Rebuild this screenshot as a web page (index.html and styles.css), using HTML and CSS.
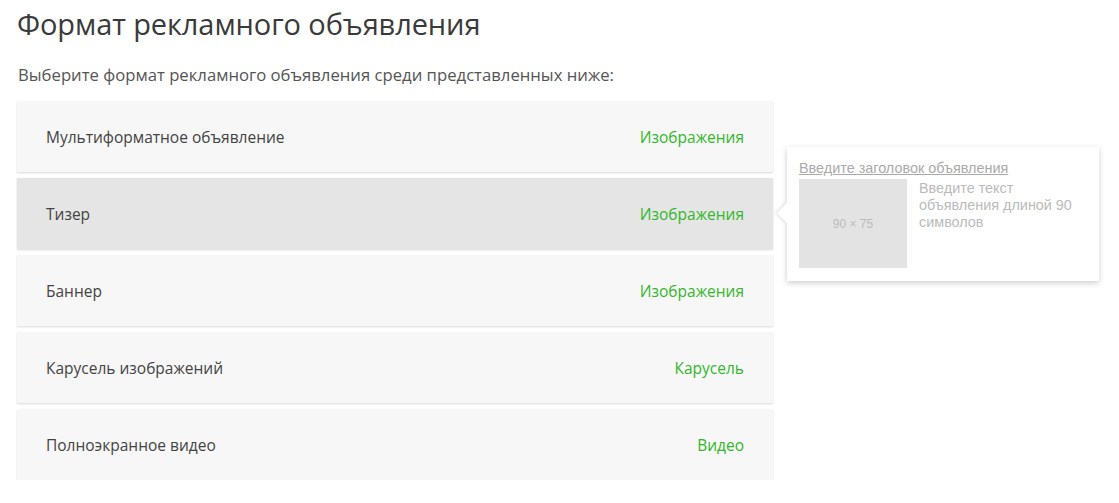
FILE: index.html
```html
<!DOCTYPE html>
<html lang="ru">
<head>
<meta charset="UTF-8">
<title>Формат рекламного объявления</title>
<link rel="stylesheet" href="styles.css">
</head>
<body>
<div class="page">
  <h1 class="title">Формат рекламного объявления</h1>
  <p class="lead">Выберите формат рекламного объявления среди представленных ниже:</p>
  <div class="layout">
    <ul class="formats">
      <li class="format"><span class="format-name">Мультиформатное объявление</span><span class="format-type">Изображения</span></li>
      <li class="format active"><span class="format-name">Тизер</span><span class="format-type">Изображения</span></li>
      <li class="format"><span class="format-name">Баннер</span><span class="format-type">Изображения</span></li>
      <li class="format"><span class="format-name">Карусель изображений</span><span class="format-type">Карусель</span></li>
      <li class="format"><span class="format-name">Полноэкранное видео</span><span class="format-type">Видео</span></li>
    </ul>
    <div class="preview">
      <a class="preview-title" href="#">Введите заголовок объявления</a>
      <div class="preview-body">
        <div class="preview-image">90 × 75</div>
        <div class="preview-text">Введите текст объявления длиной 90 символов</div>
      </div>
    </div>
  </div>
</div>
</body>
</html>
```

FILE: styles.css
```css
body {
  margin: 0;
  background-color: #fff;
  font-family: "Open Sans", sans-serif;
  color: #333;
}

.page {
  padding: 0 17px;
}

.title {
  margin: 0;
  padding-top: 5px;
  font-size: 29px;
  font-weight: 400;
  line-height: 38px;
  color: #3a3a3a;
  letter-spacing: -0.1px;
}

.lead {
  margin: 21px 0 0 1px;
  font-size: 16.7px;
  line-height: 22px;
  color: #555;
}

.layout {
  display: flex;
  align-items: flex-start;
  margin-top: 15px;
}

.formats {
  list-style: none;
  margin: 0;
  padding: 0;
  width: 756px;
  display: flex;
  flex-direction: column;
  gap: 6px;
}

.format {
  display: flex;
  justify-content: space-between;
  align-items: center;
  height: 71px;
  padding: 0 29px;
  background-color: #f7f7f7;
  box-shadow: 0 1px 2px rgba(0, 0, 0, 0.15);
  font-size: 15.5px;
  color: #444;
  box-sizing: border-box;
}

.format.active {
  background-color: #e5e5e5;
}

.format-type {
  color: #33b72b;
}

.preview {
  position: relative;
  margin: 46px 0 0 14px;
  width: 312px;
  height: 134px;
  padding: 13px 12px 0;
  box-sizing: border-box;
  background-color: #fff;
  box-shadow: 0 2px 6px rgba(0, 0, 0, 0.2);
  font-family: "Liberation Sans", Arial, sans-serif;
}

.preview::before {
  content: "";
  position: absolute;
  left: -7px;
  top: 59px;
  width: 14px;
  height: 14px;
  background-color: #fff;
  transform: rotate(45deg);
  box-shadow: -2px 2px 3px rgba(0, 0, 0, 0.08);
}

.preview-title {
  position: relative;
  display: block;
  font-size: 14.4px;
  line-height: 17px;
  color: #aaa;
  text-decoration: underline;
}

.preview-body {
  position: relative;
  display: flex;
  gap: 12px;
  margin-top: 2px;
}

.preview-image {
  flex: none;
  width: 108px;
  height: 89px;
  background-color: #e3e3e3;
  color: #bbb;
  font-size: 12px;
  display: flex;
  align-items: center;
  justify-content: center;
}

.preview-text {
  margin-top: 1px;
  font-size: 14.4px;
  line-height: 17px;
  color: #bbb;
}
```
